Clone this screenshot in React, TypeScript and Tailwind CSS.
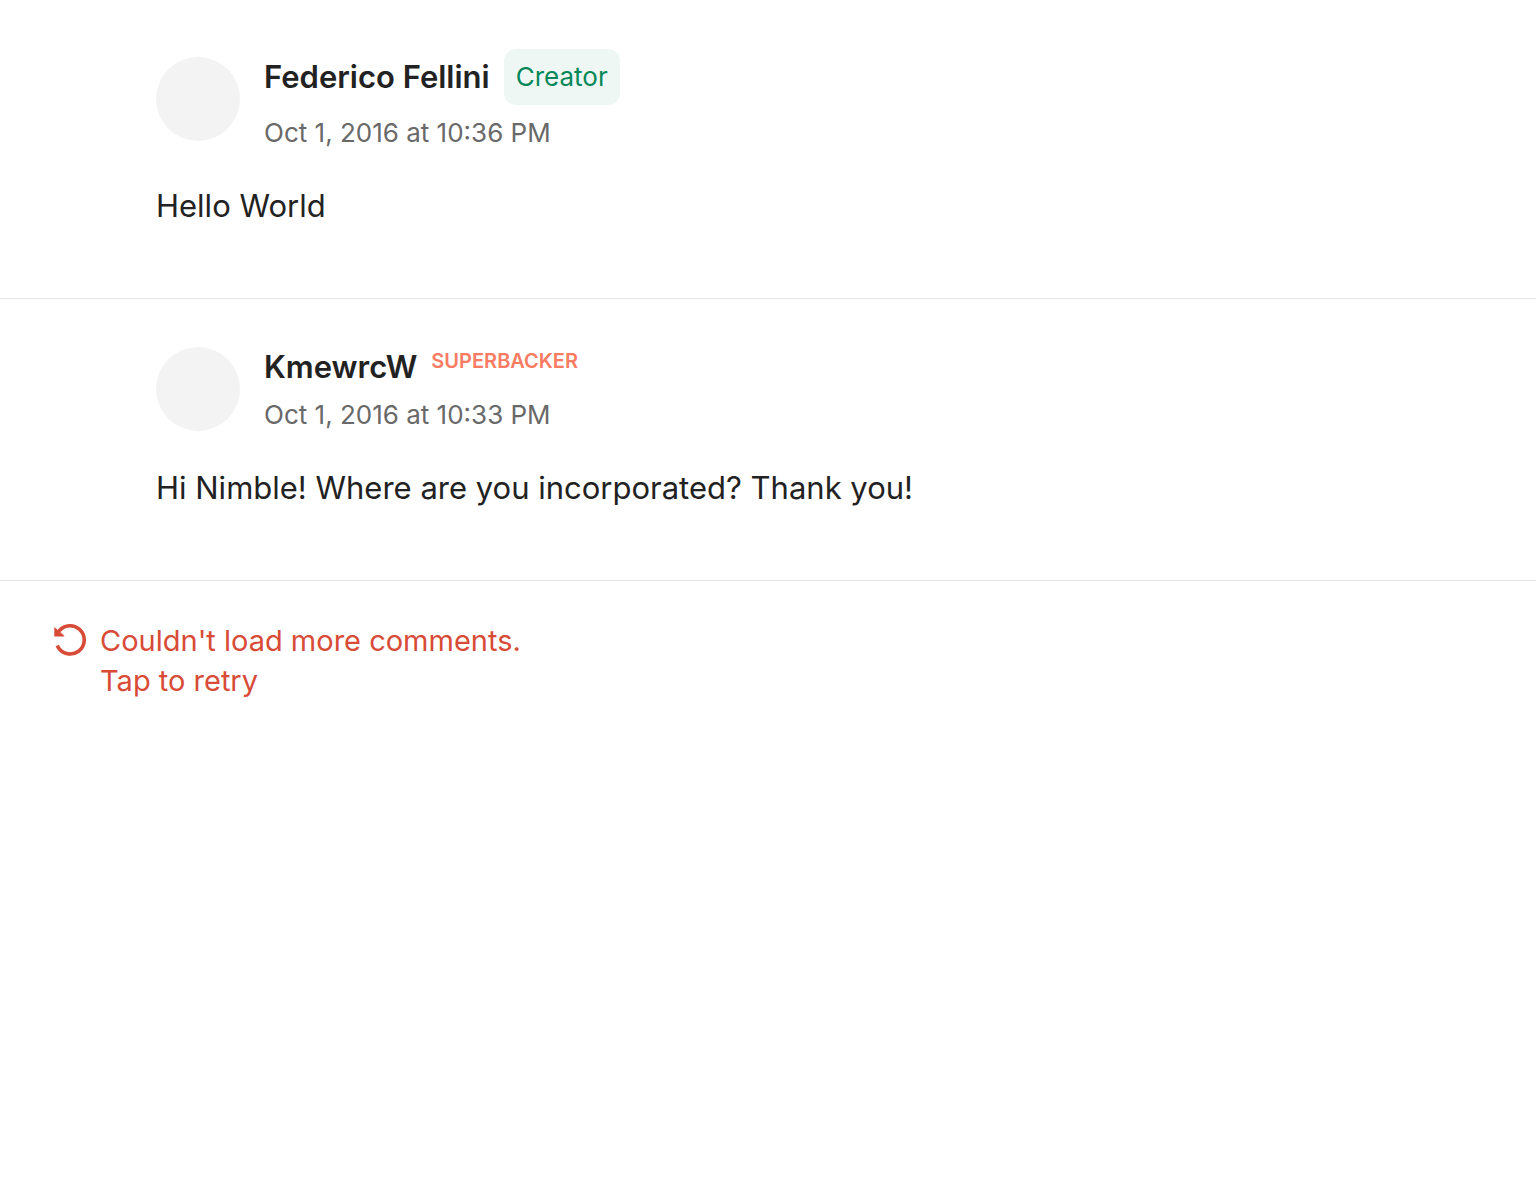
import type { ReactNode } from "react";

type CommentProps = {
  author: string;
  badge: ReactNode;
  tallBadge?: boolean;
  date: string;
  body: string;
};

function Comment({ author, badge, tallBadge = false, date, body }: CommentProps) {
  const inset = tallBadge ? "mt-2" : "mt-0";
  return (
    <article className="border-b border-[#e6e6e6] px-39 pt-12 pb-18">
      <header className="flex gap-6">
        <div className={`${inset} size-21 shrink-0 rounded-full bg-[#f3f3f3]`} />
        <div>
          <div className="flex items-start gap-3.5">
            <h2 className={`${inset} text-[31px] leading-10 font-semibold`}>{author}</h2>
            {badge}
          </div>
          <time className="mt-2 block text-[26px] leading-10 text-[#696969]">{date}</time>
        </div>
      </header>
      <p className="mt-[33px] text-[31px] leading-10">{body}</p>
    </article>
  );
}

export default function App() {
  return (
    <main className="min-h-screen bg-white pt-px font-['Inter',sans-serif] text-[#222222]">
      <Comment
        author="Federico Fellini"
        tallBadge
        badge={<span className="rounded-xl bg-[#eef7f4] px-3 py-2 text-[26px] leading-10 text-[#028858]">Creator</span>}
        date="Oct 1, 2016 at 10:36 PM"
        body="Hello World"
      />
      <Comment
        author="KmewrcW"
        badge={<span className="text-[20px] leading-7 font-semibold text-[#f97b62]">SUPERBACKER</span>}
        date="Oct 1, 2016 at 10:33 PM"
        body="Hi Nimble! Where are you incorporated? Thank you!"
      />
      <button type="button" className="mt-10 ml-13 flex items-start gap-3 text-left text-[29px] leading-10 text-[#d84b37]">
        <svg className="size-9 shrink-0" viewBox="0 0 36 36" fill="none" aria-hidden="true">
          <path d="M5.6 12.4A14.1 14.1 0 1 1 5.2 24.5" stroke="currentColor" strokeWidth="3.6" />
          <path d="M2.3 6V15.5H12.3V14.8L7.5 10.6Z" fill="currentColor" />
        </svg>
        <span>
          Couldn't load more comments.
          <br />
          Tap to retry
        </span>
      </button>
    </main>
  );
}
